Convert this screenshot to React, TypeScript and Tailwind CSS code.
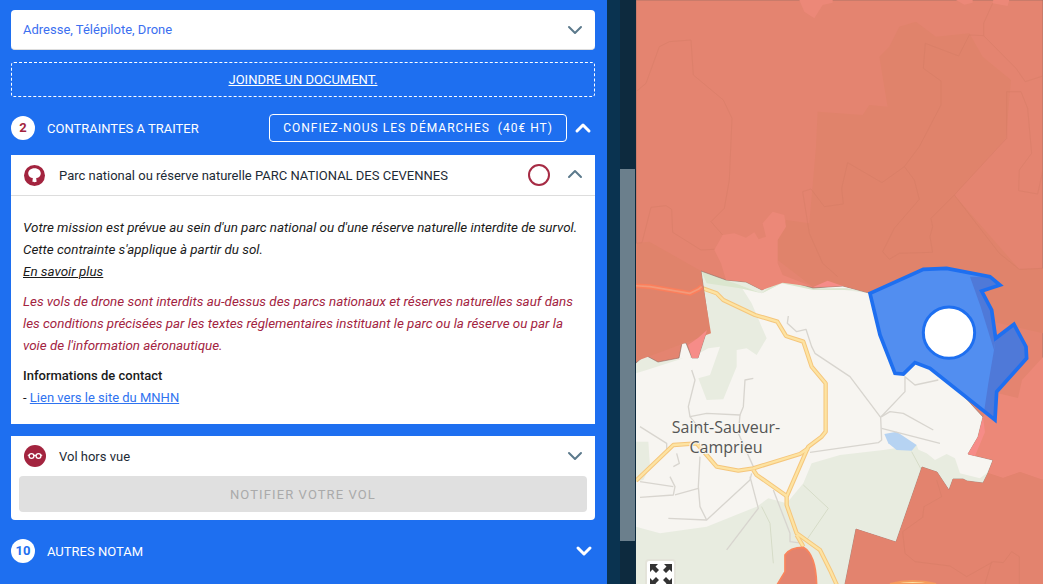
import { ChevronDown, ChevronUp } from "lucide-react";

const FONT = "font-['Roboto','Liberation_Sans',sans-serif]";

// map shapes are traced at the zoom factor (3x) so each group gets its own origin
const LIGHT_RED = "#ec8878";
const BASE_RED = "#e48470";
const DARK_RED = "#e0836b";
const LOW_RED = "#e3836e";
const CONTOUR = "#d07a62";
const ROAD_OUT = "#f5c67c";
const ROAD_IN = "#fde3a2";
const MINOR = "#d8d5cf";

const contours = [
  "0,275 30,250 70,140 100,125 165,120 172,225 262,300 288,355 280,540 265,625 225,665 260,705",
  "0,730 18,728 45,622 90,617 107,628 110,697 195,750 235,748",
  "500,575 525,567 565,620 622,612 617,565 635,488 738,548 805,500 835,540 850,598 775,685 740,755 760,778 790,760 890,757 882,710 890,680 885,655 955,585 1112,415 1112,275 1155,275 1175,325 1187,460 1150,510 1148,572 1205,582 1221,510",
  "805,500 850,440 915,315 915,243 862,205 868,130 968,168 1000,105 1043,107 1043,70 1070,10",
  "500,575 520,700 560,790 605,830",
  "1043,107 1140,205 1168,245 1221,228",
  "955,585 1090,760 1150,808 1221,805",
];

const minorRoads = [
  "445,168 442,190 470,215 498,208 515,260 525,280 630,350 722,472 725,540 715,548 510,577",
  "722,472 795,395 795,350 825,375 895,360",
  "725,470 750,455 790,460 880,510",
  "725,505 900,550",
  "155,330 165,360 145,440 150,470 200,460 300,465 310,440 315,360 340,355",
  "0,500 80,550 80,570",
  "150,470 190,520",
  "300,465 295,520 340,620",
  "180,590 175,680 180,740 200,780 330,660 335,640",
  "0,712 100,705 105,680 90,650",
  "0,665 100,680",
  "105,705 175,685",
  "85,775 200,780",
  "330,650 355,745 260,870",
  "400,690 450,820 450,845 490,850",
  "110,580 118,610 100,620",
];

const MapCanvas = () => (
  <svg viewBox="636 0 407 584" className="block h-[584px] w-[407px]">
    <rect x="636" y="0" width="407" height="584" fill="#f7f5f1" />

    {/* green zones */}
    <g transform="translate(640 260) scale(0.3333)" fill="#e8ece0">
      <polygon points="185,35 690,100 620,85 520,85 425,70 365,100 300,75 335,130 380,235 350,285 320,265 290,270 290,320 250,418 200,420 175,355 210,345 240,260 205,265 150,295" />
      <polygon points="-12,800 60,820 200,800 350,740 385,715 440,730 490,670 515,610 600,585 730,570 830,555 860,640 770,845 650,805 615,972 -12,972" />
      <polygon points="-12,545 25,545 30,620 10,660 -12,665" />
      <polygon points="-12,300 20,290 60,305 130,295 20,330 -12,340" />
      <polygon points="185,35 300,75 365,100 425,55 520,85 620,85 690,100 640,90 520,90 425,70 365,100 300,85 200,70" fill="#dbe6cf" />
    </g>
    <g transform="translate(820 430) scale(0.3333)" fill="#e8ece0">
      <polygon points="275,50 300,110 350,125 390,180 398,148 430,147 440,152 490,160 505,130 520,90 500,130 480,145 420,130 405,85 380,72 345,90 320,70" />
    </g>

    {/* water */}
    <g transform="translate(640 260) scale(0.3333)">
      <polygon points="733,522 770,515 830,555 815,572 770,570 745,550" fill="#b6d3f2" />
    </g>

    {/* roads */}
    <g transform="translate(640 260) scale(0.3333)" fill="none" strokeLinejoin="round">
      {minorRoads.map((r) => (
        <polyline key={r} points={r} stroke={MINOR} strokeWidth="4" />
      ))}
      <polyline points="490,675 565,745 500,840" stroke="#d6dcc8" strokeWidth="3" />
      <polyline points="365,740 390,790 400,910" stroke="#d6dcc8" strokeWidth="3" />
      <polyline points="815,575 850,640" stroke="#d6dcc8" strokeWidth="3" />
      {[ROAD_OUT, ROAD_IN].map((c, i) => (
        <g key={c} stroke={c} strokeWidth={i === 0 ? 13 : 7}>
          <polyline points="188,85 230,100 250,120 345,165 412,185 438,228 490,245 515,320 557,370 557,515 545,530 505,560 440,710 440,735 470,820 540,870 570,930 595,985" />
          <polyline points="-12,662 100,555 170,550 200,585 230,620 295,632 340,625 480,582 505,565" />
          <polyline points="340,630 350,645 440,708" />
          <polyline points="470,825 490,860" />
        </g>
      ))}
    </g>

    {/* restricted area */}
    <polygon
      points="636,363 645,355 658,362 679,358 682,343 686,343 692,358 698,358 707,330 708,320 701,271 726,280 746,282 762,290 782,277 799,284 813,288 843,286 869,293 983,417 978,437 968,454 993,460 988,473 983,483 967,481 963,479 953,479 949,490 937,472 922,467 896,542 856,529 845,584 1043,584 1043,0 636,0"
      fill={BASE_RED}
      stroke="#8a6a60"
      strokeWidth="0.6"
    />

    <g transform="translate(636 0) scale(0.3333)">
      <polygon fill={DARK_RED} points="545,335 680,345 700,315 755,320 730,170 760,140 790,80 840,65 900,110 1000,100 1040,170 1125,240 1110,415 955,585 1150,808 1221,805 1221,1000 700,878 620,858 530,860 425,780 425,720 450,660 520,670 540,440" />
      <polygon fill={DARK_RED} points="-3,730 40,725 195,813 202,860 225,1000 -3,1085" />
      <polygon fill={LIGHT_RED} points="235,750 260,705 295,700 330,713 355,697 368,718 390,710 380,670 410,635 445,645 450,680 425,720 425,790 440,825 530,860 440,848 378,870 330,845 270,840 255,790" />
      <polygon fill={LIGHT_RED} points="490,0 505,35 535,55 560,15 590,8 590,0" />
      <polygon fill={LIGHT_RED} points="960,0 985,14 1010,8 1010,0" />
      <polygon fill={LIGHT_RED} points="1072,0 1070,10 1115,18 1120,0" />
      <polygon fill="#f68c88" points="530,862 575,842 620,858" />
      <g fill="none" stroke={CONTOUR} strokeWidth="2" opacity="0.5">
        {contours.map((c) => (
          <polyline key={c} points={c} />
        ))}
      </g>
    </g>
    <polygon fill={LIGHT_RED} points="1043,357 1022,380 1018,398 997,393 983,417 978,437 968,454 993,460 988,473 1003,478 1020,472 1043,480" />
    <polygon fill="#f68c88" points="983,417 978,437 968,454 975,456 985,432" />
    <polygon fill="#f68c88" points="692,358 698,358 707,330 698,338 688,345" />
    <polygon fill={LOW_RED} points="1043,480 1020,472 1003,478 988,473 983,483 967,481 963,479 953,479 949,490 937,472 922,467 896,542 856,529 845,584 1043,584" />
    <g transform="translate(820 430) scale(0.3333)" fill="none" stroke={CONTOUR} strokeWidth="2" opacity="0.5">
      <polyline points="350,150 365,200 312,230 308,262 248,305 255,370 285,395 390,408 440,440 520,395 550,398 575,365 598,380 598,462" />
      <polyline points="515,395 495,462" />
    </g>

    {/* orange road inside the zone */}
    <g transform="translate(600 130) scale(0.3333)" fill="none" strokeLinejoin="round">
      <polyline points="105,467 150,470 270,490 295,478 305,470" stroke="#fb7f5c" strokeWidth="14" />
      <polyline points="105,467 150,470 270,490 295,478 305,470" stroke="#f39a7a" strokeWidth="5" />
    </g>

    {/* bottom blobs */}
    <g transform="translate(640 260) scale(0.3333)">
      <path d="M405,985 L435,935 L435,885 Q450,862 490,862 Q530,885 530,985 Z" fill={LOW_RED} stroke="#f9855d" strokeWidth="5" />
    </g>
    <path d="M890,584 Q912,578 936,584 Z" fill="#fde3a2" stroke="#f59a5c" strokeWidth="2" />

    {/* flight zone */}
    <g transform="translate(850 250) scale(0.3333)">
      <polygon points="60,130 220,58 290,55 420,80 450,105 395,123 425,180 437,265 492,223 528,290 530,325 440,425 435,510 240,355 195,338 160,372 135,370 90,255" fill="#528ef0" />
      <polygon points="360,80 420,80 450,105 395,123 425,180 437,265 432,300 392,170" fill="#4f79d8" />
      <polygon points="437,265 492,223 528,290 530,325 440,425 435,510 403,480 415,400 432,300" fill="#4f79d8" />
      <polygon points="60,130 220,58 290,55 420,80 450,105 395,123 425,180 437,265 492,223 528,290 530,325 440,425 435,510 240,355 195,338 160,372 135,370 90,255" fill="none" stroke="#1e6ff0" strokeWidth="11" />
      <circle cx="297" cy="248" r="77" fill="#ffffff" stroke="#1e6ff0" strokeWidth="9" />
    </g>

    <g fontFamily="'Open Sans', 'Noto Sans', sans-serif" fontSize="16" fill="#555555" textAnchor="middle">
      <text x="726" y="432.500" stroke="#f7f5f1" strokeWidth="2" paintOrder="stroke">Saint-Sauveur-</text>
      <text x="726" y="453" stroke="#f7f5f1" strokeWidth="2" paintOrder="stroke">Camprieu</text>
    </g>
  </svg>
);

const FullscreenIcon = () => (
  <svg viewBox="0 0 22 22" className="h-[22px] w-[22px]" fill="#333333">
    <polygon points="0,0 8,0 5.5,2.5 9,6 6,9 2.5,5.5 0,8" />
    <polygon points="22,0 14,0 16.5,2.5 13,6 16,9 19.5,5.5 22,8" />
    <polygon points="0,22 8,22 5.5,19.5 9,16 6,13 2.5,16.5 0,14" />
    <polygon points="22,22 14,22 16.5,19.5 13,16 16,13 19.5,16.5 22,14" />
  </svg>
);

const TreeIcon = () => (
  <svg viewBox="0 0 20 20" className="h-[21px] w-[21px]">
    <circle cx="10" cy="10" r="10" fill="#a3243f" />
    <path d="M10 3c3.600 0 6 2.300 6 5 0 2.600-2.100 4.200-4.400 4.400l.4 3.400c0 .7-3.900.7-4 0l.4-3.400C6.100 12.200 4 10.600 4 8c0-2.700 2.400-5 6-5z" fill="#ffffff" />
  </svg>
);

const GlassesIcon = () => (
  <svg viewBox="0 0 22 22" className="h-[22px] w-[22px]">
    <circle cx="11" cy="11" r="11" fill="#a3243f" />
    <g fill="none" stroke="#ffffff" strokeWidth="1.3">
      <circle cx="7.500" cy="11" r="2.400" />
      <circle cx="14.500" cy="11" r="2.400" />
      <path d="M9.900 10.500h2.200M5 10.500l-1.200-.5M17 10.500l1.200-.5" />
    </g>
  </svg>
);

const CountBadge = ({ value, color }: { value: string; color: string }) => (
  <span className={`flex h-6 w-6 shrink-0 items-center justify-center rounded-full bg-white text-[13px] font-bold ${color}`}>
    {value}
  </span>
);

const App = () => {
  return (
    <div className={`flex h-[584px] w-[1043px] overflow-hidden ${FONT}`}>
      <div className="h-full w-[607px] shrink-0 bg-[#1e6ff0] pl-[11px] pr-[12px] pt-[10px]">
        <div className="flex h-10 items-center justify-between rounded-[4px] border-b border-[#dddddd] bg-white pl-3 pr-2">
          <span className="text-[13px] text-[#3b6ff0]">Adresse, Télépilote, Drone</span>
          <ChevronDown size={24} strokeWidth={2} className="text-[#5c7a8c]" />
        </div>

        <div className="mt-3 flex h-[35px] items-center justify-center rounded-[3px] border border-dashed border-white">
          <span className="text-[13px] text-white underline">JOINDRE UN DOCUMENT.</span>
        </div>

        <div className="mt-[17px] flex h-7 items-center">
          <CountBadge value="2" color="text-[#a3243f]" />
          <span className="ml-3 pt-px text-[13px] text-white">CONTRAINTES A TRAITER</span>
          <button className="ml-auto h-7 w-[298px] rounded-[4px] border border-white text-center text-[12px] tracking-[1px] text-white whitespace-pre">
            CONFIEZ-NOUS LES DÉMARCHES  (40€ HT)
          </button>
          <ChevronUp size={24} strokeWidth={3} className="ml-[4px] text-white" />
        </div>

        <div className="mt-[13px] h-[269px] bg-white">
          <div className="flex h-[41px] items-center border-b border-[#dddddd] pl-[13px] pr-2">
            <TreeIcon />
            <span className="ml-[14px] pt-px text-[13px] text-[#1d2b36]">
              Parc national ou réserve naturelle PARC NATIONAL DES CEVENNES
            </span>
            <span className="ml-auto h-[22px] w-[22px] rounded-full border-2 border-[#a62b44]" />
            <ChevronUp size={24} strokeWidth={2} className="ml-[13px] -mt-0.5 text-[#5c7a8c]" />
          </div>
          <div className="px-3 pt-[21px] text-[13px] leading-[22px]">
            <p className="text-[13.4px] italic text-[#1a1a1a]">
              Votre mission est prévue au sein d'un parc national ou d'une réserve naturelle interdite de survol.
              <br />
              Cette contrainte s'applique à partir du sol.
              <br />
              <span className="underline">En savoir plus</span>
            </p>
            <p className="mt-2 text-[13.4px] italic text-[#a3243f]">
              Les vols de drone sont interdits au-dessus des parcs nationaux et réserves naturelles sauf dans
              <br />
              les conditions précisées par les textes réglementaires instituant le parc ou la réserve ou par la
              <br />
              voie de l'information aéronautique.
            </p>
            <p className="mt-2 font-medium text-[#1a1a1a]">Informations de contact</p>
            <p className="text-[#1a1a1a]">
              - <span className="text-[#2f73f0] underline">Lien vers le site du MNHN</span>
            </p>
          </div>
        </div>

        <div className="mt-3 h-[84px] rounded-b-[4px] bg-white">
          <div className="flex h-10 items-center pl-[13px] pr-2">
            <GlassesIcon />
            <span className="ml-[13px] pt-px text-[13px] text-[#1d2b36]">Vol hors vue</span>
            <ChevronDown size={24} strokeWidth={2} className="ml-auto text-[#5c7a8c]" />
          </div>
          <div className="mx-2 flex h-9 items-center justify-center rounded-[4px] bg-[#e0e0e0] pt-px text-[13px] tracking-[1.1px] text-[#aaaaaa]">
            NOTIFIER VOTRE VOL
          </div>
        </div>

        <div className="mt-[19px] flex h-6 items-center">
          <CountBadge value="10" color="text-[#1e6ff0]" />
          <span className="ml-3 pt-px text-[13px] text-white">AUTRES NOTAM</span>
          <ChevronDown size={24} strokeWidth={3} className="ml-auto mr-[-1px] text-white" />
        </div>
      </div>

      <div className="h-full w-[13px] shrink-0 bg-[#0a3350]" />
      <div className="h-full w-4 shrink-0 bg-[#0d2a3e] pt-[169px]">
        <div className="h-[372px] w-[15px] bg-[#6b7f8c]" />
      </div>

      <div className="relative h-full w-[407px] shrink-0 overflow-hidden">
        <MapCanvas />
        <div className="absolute left-[9px] top-[559px] flex h-[31px] w-[31px] items-center justify-center rounded-[4px] border-2 border-[#e4e4da] bg-white">
          <FullscreenIcon />
        </div>
      </div>
    </div>
  );
};

export default App;
